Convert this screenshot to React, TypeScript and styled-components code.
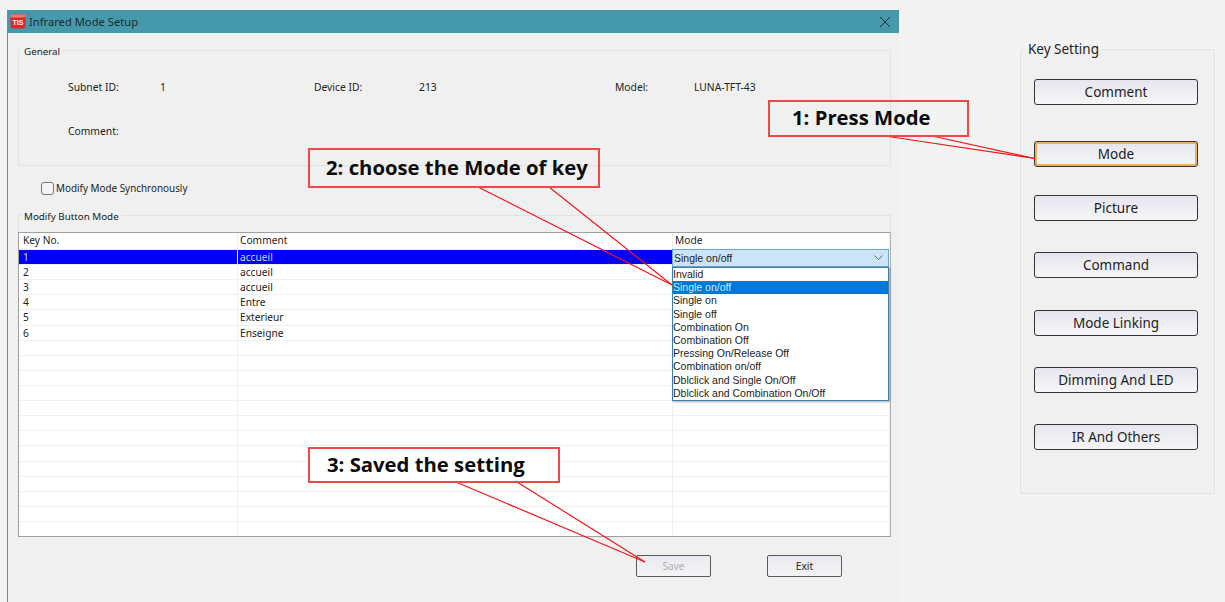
import React from 'react';
import styled, { createGlobalStyle } from 'styled-components';

const GlobalStyle = createGlobalStyle`
  html, body {
    margin: 0;
    padding: 0;
    background: #f3f3f3;
    overflow: hidden;
  }
`;

const Page = styled.div`
  position: relative;
  display: flex;
  align-items: flex-start;
  width: 1225px;
  height: 602px;
  padding: 10px 0 0 7px;
  box-sizing: border-box;
  font-family: 'Noto Sans', 'Liberation Sans', sans-serif;
  font-size: 10.3px;
  color: #222;
  overflow: hidden;
`;

const Window = styled.div`
  display: flex;
  flex-direction: column;
  width: 892px;
  height: 592px;
  box-sizing: border-box;
  background: #f0f0f0;
  border-left: 1px solid #4a9bad;
`;

const TitleBar = styled.div`
  display: flex;
  align-items: center;
  height: 23px;
  padding: 0 8px 0 2px;
  background: #4599ab;
  font-size: 11.2px;
  color: #1d2b30;
`;

const TitleText = styled.span`
  flex: 1;
  margin-left: 3px;
`;

const Body = styled.div`
  display: flex;
  flex-direction: column;
  padding: 0 8px 0 10px;
`;

const Group = styled.fieldset`
  margin: 0;
  padding: 0;
  min-width: 0;
  border: 1px solid #e2e2e2;
  border-radius: 1px;
`;

const Legend = styled.legend`
  margin-left: 2px;
  padding: 0 2px 0 3px;
  font-size: 9.8px;
  line-height: 14px;
  transform: translateY(2px);
`;

const GeneralGroup = styled(Group)`
  height: 123px;
  margin-top: 10px;
  box-sizing: border-box;
`;

const InfoGrid = styled.div`
  display: grid;
  grid-template-columns: 92px 154px 105px 196px 79px 1fr;
  grid-auto-rows: 44px;
  padding: 23px 0 0 49px;
  line-height: 14px;
`;

const SyncRow = styled.label`
  display: flex;
  align-items: center;
  gap: 2px;
  height: 14px;
  margin: 15px 0 0 23px;
  font-size: 9.9px;
`;

const CheckBox = styled.span`
  width: 11px;
  height: 11px;
  background: #f4f4f4;
  border: 1px solid #777;
  border-radius: 3px;
`;

const ButtonModeGroup = styled(Group)`
  position: relative;
  height: 329px;
  margin-top: 13px;
  box-sizing: border-box;
  border-bottom: none;
`;

const Table = styled.div`
  display: flex;
  flex-direction: column;
  height: 305px;
  margin: 10px -1px 0;
  background: #fff;
  border: 1px solid #a0a0a0;
  border-right-color: #b0b0b0;
  box-sizing: border-box;
`;

const HeaderRow = styled.div`
  display: grid;
  flex: none;
  grid-template-columns: 219px 435px 1fr;
  height: 16px;
  line-height: 15px;
  font-size: 10.2px;
`;

const Row = styled.div`
  display: grid;
  flex: 1;
  grid-template-columns: 219px 435px 1fr;
  min-height: 0;
  border-top: 1px solid #f0f0f0;
  box-sizing: border-box;
  line-height: 15px;
  font-size: 10.2px;
  &:first-of-type {
    border-top: none;
  }
`;

const Cell = styled.div<{ $selected?: boolean }>`
  padding-left: 2px;
  border-right: 1px solid #efefef;
  overflow: hidden;
  white-space: nowrap;
  background: ${(p) => (p.$selected ? '#0000f2' : 'transparent')};
  color: ${(p) => (p.$selected ? '#c8d4ff' : 'inherit')};
  &:first-child {
    padding-left: 4px;
  }
`;

const Combo = styled.div`
  position: absolute;
  left: 653px;
  top: 27px;
  display: flex;
  align-items: center;
  justify-content: space-between;
  width: 217px;
  height: 18px;
  padding: 0 5px 0 1px;
  box-sizing: border-box;
  background: #cce4f7;
  border: 1px solid #6aa6d6;
  font-family: 'Liberation Sans', Arial, sans-serif;
  font-size: 10.5px;
  color: #1c1c1c;
`;

const DropList = styled.ul`
  position: absolute;
  left: 653px;
  top: 45px;
  width: 217px;
  height: 134px;
  margin: 0;
  padding: 0;
  box-sizing: border-box;
  list-style: none;
  background: #fff;
  border: 1px solid #3d7fa8;
  box-shadow: 1px 1px 2px rgba(0, 0, 0, 0.35);
  font-family: 'Liberation Sans', Arial, sans-serif;
  font-size: 10.5px;
`;

const DropItem = styled.li<{ $active?: boolean }>`
  height: 13.2px;
  line-height: 13.2px;
  white-space: nowrap;
  background: ${(p) => (p.$active ? '#0078d7' : 'transparent')};
  color: ${(p) => (p.$active ? '#cfe6fa' : '#222')};
`;

const Footer = styled.div`
  display: flex;
  justify-content: flex-end;
  gap: 56px;
  padding: 18px 49px 0 0;
`;

const DialogButton = styled.button<{ $disabled?: boolean }>`
  width: 75px;
  height: 22px;
  padding: 0;
  font-family: inherit;
  font-size: 10.2px;
  color: ${(p) => (p.$disabled ? '#b0b0b0' : '#222')};
  background: linear-gradient(#e9e9ef, #f4f4f6);
  border: 1px solid #5a5a5a;
  border-radius: 2px;
`;

const SidePanel = styled(Group)`
  width: 195px;
  height: 452px;
  margin: 32px 0 0 121px;
  padding: 0;
  box-sizing: border-box;
  background: #f0f0f0;
`;

const SideLegend = styled.legend`
  margin-left: 4px;
  padding: 0 3px;
  font-size: 13.5px;
  line-height: 15px;
`;

const SideList = styled.div`
  display: flex;
  flex-direction: column;
  gap: 31.4px;
  padding: 22px 16px 0 13px;
`;

const KeyButton = styled.button<{ $focused?: boolean }>`
  height: 26px;
  padding: 0;
  font-family: inherit;
  font-size: 13.5px;
  color: #222;
  background: linear-gradient(#e6e5ee, #f6f6f8);
  border: 1px solid #333;
  border-radius: 3px;
  box-shadow: ${(p) => (p.$focused ? 'inset 0 0 0 2px #eeb254' : 'none')};
  margin-top: ${(p) => (p.$focused ? '5px' : '0')};
  margin-bottom: ${(p) => (p.$focused ? '-4px' : '0')};
`;

const Callout = styled.div<{ $x: number; $y: number; $w: number; $h: number; $indent: number; $filled?: boolean }>`
  position: absolute;
  left: ${(p) => p.$x}px;
  top: ${(p) => p.$y}px;
  width: ${(p) => p.$w}px;
  height: ${(p) => p.$h}px;
  padding: 0 0 3px ${(p) => p.$indent}px;
  box-sizing: border-box;
  display: flex;
  align-items: center;
  background: ${(p) => (p.$filled ? '#fff' : 'transparent')};
  border: 2px solid #f24848;
  font-family: 'Open Sans', 'Noto Sans', sans-serif;
  font-size: 20.3px;
  font-weight: 700;
  color: #0b0b0b;
  white-space: nowrap;
`;

const Leaders = styled.svg`
  position: absolute;
  left: 0;
  top: 0;
  pointer-events: none;
`;

const LEADERS = [
  '885,136 1035,158.5',
  '932,136 1035,158.5',
  '478,187 672,285',
  '549,187 672,285',
  '456,482 645,562',
  '517,482 645,562',
];

const ROW_COUNT = 19;
const KEYS: [string, string][] = [
  ['1', 'accueil'],
  ['2', 'accueil'],
  ['3', 'accueil'],
  ['4', 'Entre'],
  ['5', 'Exterieur'],
  ['6', 'Enseigne'],
];

const MODES = [
  'Invalid',
  'Single on/off',
  'Single on',
  'Single off',
  'Combination On',
  'Combination Off',
  'Pressing On/Release Off',
  'Combination on/off',
  'Dblclick and Single On/Off',
  'Dblclick and Combination On/Off',
];

const SIDE_BUTTONS = ['Comment', 'Mode', 'Picture', 'Command', 'Mode Linking', 'Dimming And LED', 'IR And Others'];

const Logo = () => (
  <svg width="16" height="15" viewBox="0 0 16 15">
    <rect x="0.5" y="0.5" width="15" height="14" rx="3" fill="#e0262c" />
    <rect x="0.5" y="0.5" width="15" height="3" rx="1.5" fill="#f07a70" />
    <text x="8" y="10.5" textAnchor="middle" fontSize="7" fontWeight="700" fontFamily="Liberation Sans, sans-serif" fill="#fff">
      TIS
    </text>
  </svg>
);

const App: React.FC = () => {
  const rows = Array.from({ length: ROW_COUNT }, (_, i) => KEYS[i] ?? ['', '']);

  return (
    <Page>
      <GlobalStyle />
      <Window>
        <TitleBar>
          <Logo />
          <TitleText>Infrared Mode Setup</TitleText>
          <svg width="12" height="12" viewBox="0 0 12 12" stroke="#1d2b30" strokeWidth="1">
            <path d="M1 1 L11 11 M11 1 L1 11" />
          </svg>
        </TitleBar>
        <Body>
          <GeneralGroup>
            <Legend>General</Legend>
            <InfoGrid>
              <span>Subnet ID:</span>
              <span>1</span>
              <span>Device ID:</span>
              <span>213</span>
              <span>Model:</span>
              <span>LUNA-TFT-43</span>
              <span>Comment:</span>
            </InfoGrid>
          </GeneralGroup>
          <SyncRow>
            <CheckBox />
            Modify Mode Synchronously
          </SyncRow>
          <ButtonModeGroup>
            <Legend>Modify Button Mode</Legend>
            <Table>
              <HeaderRow>
                <Cell>Key No.</Cell>
                <Cell>Comment</Cell>
                <Cell>Mode</Cell>
              </HeaderRow>
              {rows.map(([key, comment], i) => (
                <Row key={i}>
                  <Cell $selected={i === 0}>{key}</Cell>
                  <Cell $selected={i === 0}>{comment}</Cell>
                  <Cell />
                </Row>
              ))}
            </Table>
            <Combo>
              Single on/off
              <svg width="9" height="6" viewBox="0 0 9 6" fill="none" stroke="#666" strokeWidth="1">
                <path d="M0.5 0.5 L4.5 4.5 L8.5 0.5" />
              </svg>
            </Combo>
            <DropList>
              {MODES.map((mode, i) => (
                <DropItem key={mode} $active={i === 1}>
                  {mode}
                </DropItem>
              ))}
            </DropList>
          </ButtonModeGroup>
          <Footer>
            <DialogButton $disabled>Save</DialogButton>
            <DialogButton>Exit</DialogButton>
          </Footer>
        </Body>
      </Window>
      <SidePanel>
        <SideLegend>Key Setting</SideLegend>
        <SideList>
          {SIDE_BUTTONS.map((label) => (
            <KeyButton key={label} $focused={label === 'Mode'}>
              {label}
            </KeyButton>
          ))}
        </SideList>
      </SidePanel>
      <Leaders width="1225" height="602" fill="none" stroke="#f01818" strokeWidth="1.2">
        {LEADERS.map((points) => (
          <polyline key={points} points={points} />
        ))}
      </Leaders>
      <Callout $x={768} $y={100} $w={201} $h={37} $indent={22}>
        1: Press Mode
      </Callout>
      <Callout $x={308} $y={148} $w={292} $h={40} $indent={16}>
        2: choose the Mode of key
      </Callout>
      <Callout $x={308} $y={447} $w={252} $h={36} $indent={17} $filled>
        3: Saved the setting
      </Callout>
    </Page>
  );
};

export default App;
